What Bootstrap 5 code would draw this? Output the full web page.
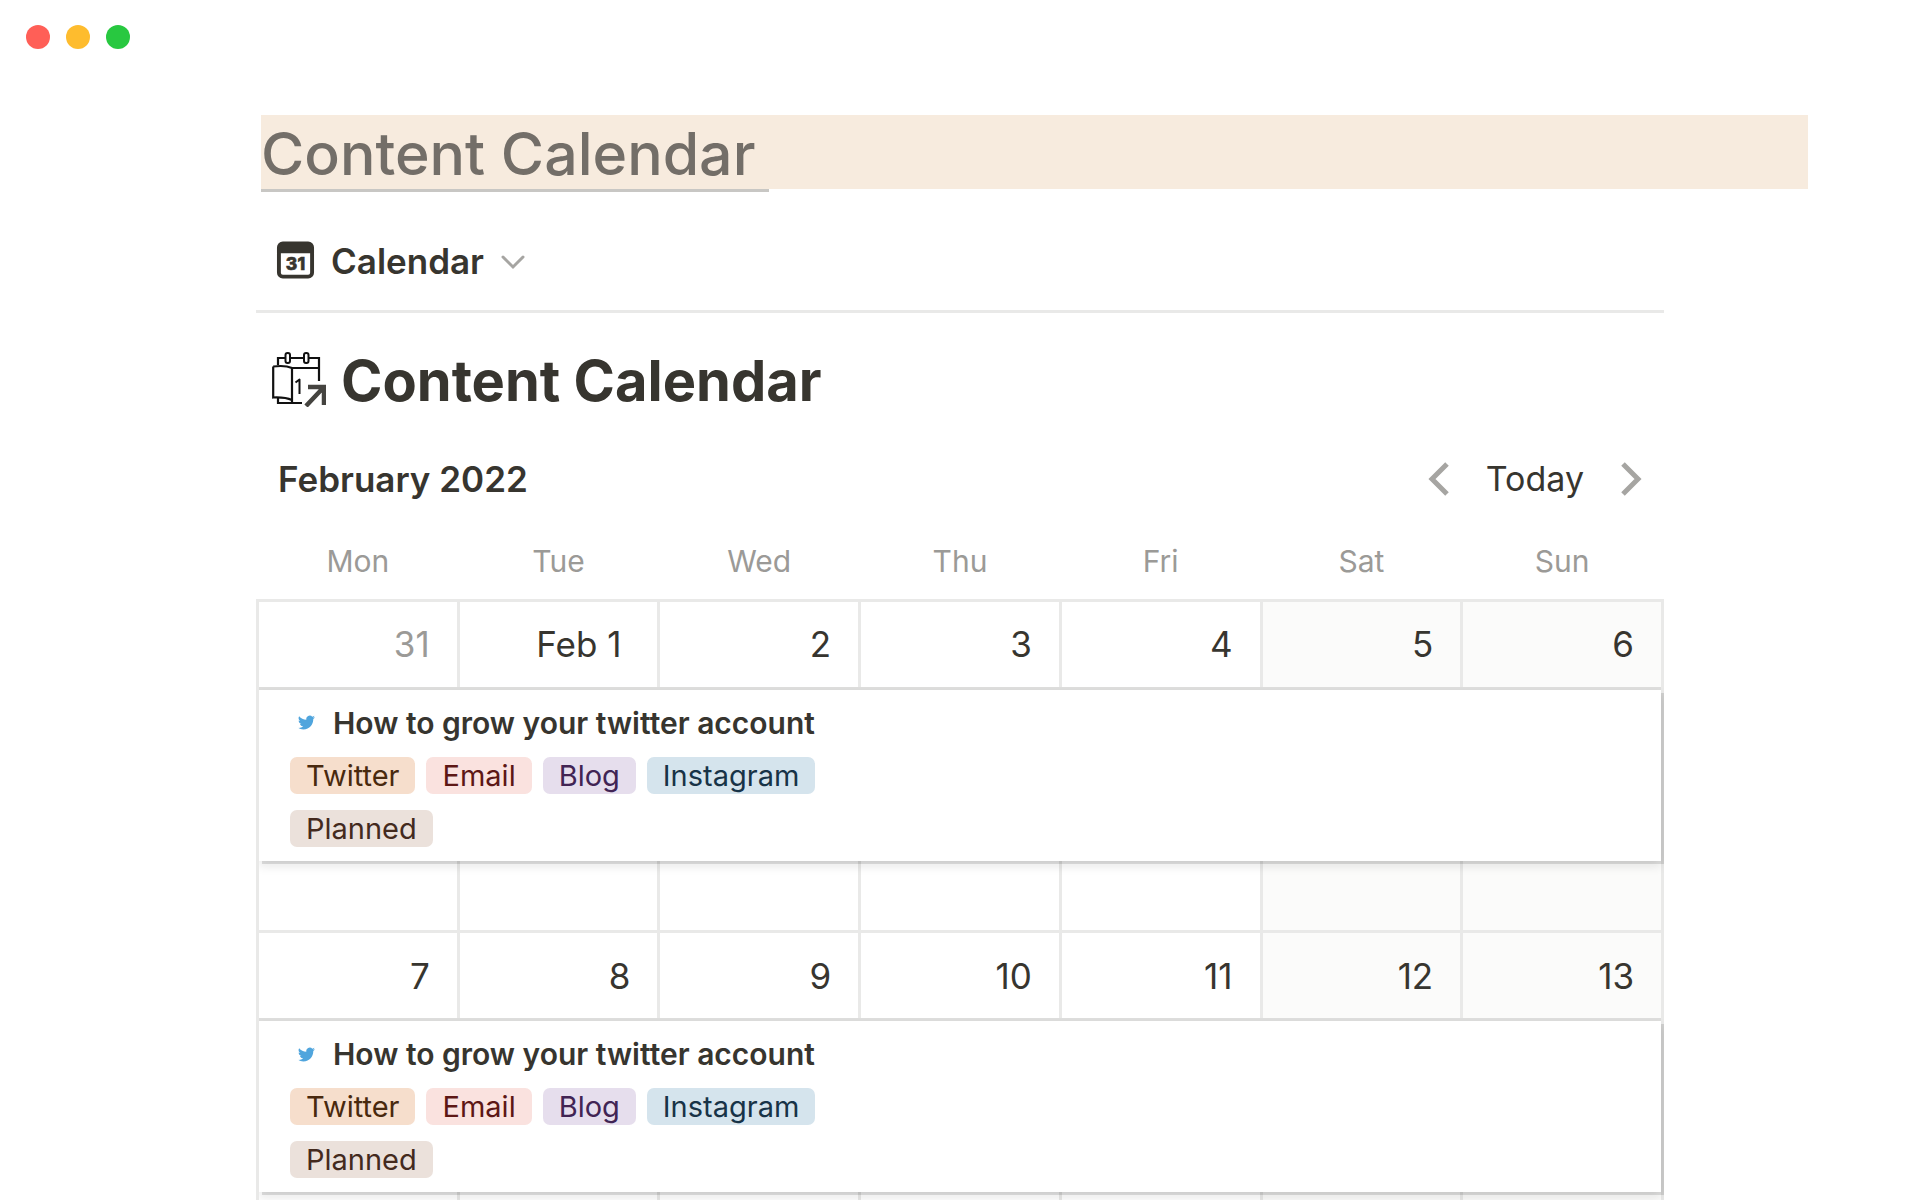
<!DOCTYPE html>
<html lang="en">
<head>
<meta charset="utf-8">
<meta name="viewport" content="width=device-width, initial-scale=1">
<title>Content Calendar</title>
<link href="https://cdn.jsdelivr.net/npm/bootstrap@5.3.0/dist/css/bootstrap.min.css" rel="stylesheet">
<style>
:root { --ink: #37352f; --muted: #9b9a97; --line: #e9e9e8; }
body { font-family: Inter, "Liberation Sans", sans-serif; color: var(--ink); background: #fff; }
.dot { width: 24px; height: 24px; border: 0; padding: 0; border-radius: 50%; }
.dot-close { background: #ff5f57; }
.dot-min { background: #febc2e; }
.dot-max { background: #28c840; }
.titlebar { padding: 25px 26px; }
.workspace { margin: 41px 256px 0 256px; }
.banner { margin: 0 -144px 0 5px; height: 74px; background: #f7ebde; }
.banner h1 { display: inline-block; height: 77px; margin: 0; padding: 2px 14px 0 0; font-size: 59px; line-height: 74px; font-weight: 500; color: #736e68; border-bottom: 3px solid #c8c7c4; white-space: nowrap; }
.views { height: 124px; padding: 22px 20px 0; border-bottom: 3px solid var(--line); }
.view-btn { color: var(--ink); font-size: 35px; line-height: 48px; font-weight: 600; }
.db-title { padding: 38px 16px 0; gap: 15px; }
.db-title svg { margin-bottom: 4px; }
.db-title h2 { font-size: 56px; line-height: 60px; font-weight: 700; margin: 0; }
.month { padding: 44px 22px 0 22px; }
.month h3, .month .btn { font-size: 35px; line-height: 48px; }
.month h3 { font-weight: 600; margin: 0; }
.month .btn { color: var(--ink); }
.month .today { font-size: 34px; margin: 0 36px; }
.cal { width: 100%; table-layout: fixed; border-collapse: collapse; }
.cal th { height: 97px; font-size: 30px; line-height: 40px; font-weight: 400; color: var(--muted); text-align: center; vertical-align: bottom; padding: 0 0 18px; }
.cal td { border: 3px solid var(--line); padding: 0; }
.cal .day { height: 88px; font-size: 35px; line-height: 48px; text-align: right; padding-right: 27px; }
.cal .weekend { background: #fbfbfa; }
.cal .other { color: var(--muted); }
.cal .month-start { padding-right: 36px; }
.cal .spacer td { height: 71px; border-top: 0; }
.cal .entry-cell { border-bottom: 0; }
.entry { height: 171px; padding: 12px 31px 0; background: #fff; box-shadow: 3px 3px 0 rgba(15,15,15,.12), 0 -3px 0 rgba(15,15,15,.05), 0 5px 10px rgba(15,15,15,.1); clip-path: inset(-3px -3px -20px 0); }
.entry a { font-size: 30px; line-height: 42px; font-weight: 600; color: var(--ink); gap: 18px; padding-left: 8px; margin-bottom: 13px; }
.tags { gap: 11px; margin-bottom: 16px; }
.tag { font-size: 29px; line-height: 38px; height: 37px; padding: 0 16px; border-radius: 7px; }
.tag-orange { background: #f6decc; color: #49290e; }
.tag-red { background: #fae2df; color: #5d1715; }
.tag-purple { background: #e6deed; color: #412454; }
.tag-blue { background: #d5e4ed; color: #183347; }
.tag-brown { background: #ebe1db; color: #442a1e; }
</style>
<script src="https://cdn.jsdelivr.net/npm/bootstrap@5.3.0/dist/js/bootstrap.bundle.min.js"></script>
</head>
<body>
<svg class="d-none" xmlns="http://www.w3.org/2000/svg">
  <symbol id="bird" viewBox="0 0 24 24"><path d="M23.95 4.57a10 10 0 0 1-2.82.77 4.96 4.96 0 0 0 2.16-2.72c-.95.55-2 .96-3.13 1.18a4.92 4.92 0 0 0-8.38 4.48C7.69 8.1 4.07 6.13 1.64 3.16a4.92 4.92 0 0 0 1.52 6.57 4.9 4.9 0 0 1-2.23-.61v.06a4.92 4.92 0 0 0 3.95 4.83 5 5 0 0 1-2.21.08 4.94 4.94 0 0 0 4.6 3.42A9.87 9.87 0 0 1 0 19.54a13.99 13.99 0 0 0 7.55 2.21c9.05 0 14-7.5 14-13.98l-.02-.63a9.94 9.94 0 0 0 2.42-2.57z" fill="#50a5dd"/></symbol>
</svg>
<div class="vh-100 overflow-hidden">
  <header class="titlebar d-flex gap-3">
    <button class="dot dot-close" aria-label="Close"></button>
    <button class="dot dot-min" aria-label="Minimise"></button>
    <button class="dot dot-max" aria-label="Zoom"></button>
  </header>
  <main class="workspace">
    <div class="banner"><h1>Content Calendar</h1></div>
    <nav class="views d-flex align-items-center">
      <button class="view-btn btn border-0 p-0 d-flex align-items-center">
        <svg class="me-3" width="39" height="40" viewBox="0 0 40 40" aria-hidden="true"><path fill-rule="evenodd" d="M7 0h26a6 6 0 0 1 6 6v26a6 6 0 0 1-6 6H7a6 6 0 0 1-6-6V6a6 6 0 0 1 6-6zM5 12v20a2 2 0 0 0 2 2h26a2 2 0 0 0 2-2V12z" fill="#37352f"/><text x="20" y="29" text-anchor="middle" font-size="18" font-weight="800" fill="#37352f" stroke="#37352f" stroke-width=".6">31</text></svg>
        <span>Calendar</span>
        <svg class="ms-3" width="26" height="18" viewBox="0 0 26 18" fill="none" aria-hidden="true"><path d="M3 5l10 10L23 5" stroke="#a6a5a2" stroke-width="3" stroke-linecap="round"/></svg>
      </button>
    </nav>
    <div class="db-title d-flex align-items-center">
      <svg width="54" height="56" viewBox="0 0 54 56" fill="none" stroke="#111" stroke-width="2" aria-hidden="true"><path d="M6 14V7h7M18 7h13M36 7h11v23M20 17h27M6 47v5h24M20 17v34" stroke-width="2.200"/><path d="M1.200 15.500q12-1.500 18.800 1.500M1.200 15.500v31q12-.5 18.800 2.500" stroke-width="2.200"/><rect x="13.500" y="2" width="4.500" height="10" rx="2"/><rect x="32" y="2" width="4.500" height="10" rx="2"/><path d="M23.500 31.500l4-3v14.500" stroke-linejoin="round"/><path d="M36 36h16v18M51 37L34 55" stroke="#454440" stroke-width="4.500"/></svg>
      <h2>Content Calendar</h2>
    </div>
    <div class="month d-flex align-items-center justify-content-between">
      <h3>February 2022</h3>
      <div class="d-flex align-items-center">
        <button class="btn border-0 p-0 d-flex" aria-label="Previous month"><svg width="22" height="36" viewBox="0 0 22 36" fill="none"><path d="M19 3L4 18l15 15" stroke="#a6a5a2" stroke-width="5"/></svg></button>
        <button class="btn border-0 p-0 today">Today</button>
        <button class="btn border-0 p-0 d-flex" aria-label="Next month"><svg width="22" height="36" viewBox="0 0 22 36" fill="none"><path d="M3 3l15 15L3 33" stroke="#a6a5a2" stroke-width="5"/></svg></button>
      </div>
    </div>
    <table class="cal">
      <thead><tr><th scope="col">Mon</th><th scope="col">Tue</th><th scope="col">Wed</th><th scope="col">Thu</th><th scope="col">Fri</th><th scope="col">Sat</th><th scope="col">Sun</th></tr></thead>
      <tbody>
        <tr><td class="day other">31</td><td class="day month-start">Feb 1</td><td class="day">2</td><td class="day">3</td><td class="day">4</td><td class="day weekend">5</td><td class="day weekend">6</td></tr>
        <tr><td class="entry-cell" colspan="7">
          <div class="entry position-relative">
            <a class="d-flex align-items-center text-decoration-none" href="#"><svg width="17" height="17" aria-hidden="true"><use href="#bird"/></svg>How to grow your twitter account</a>
            <div class="tags d-flex"><span class="tag tag-orange">Twitter</span><span class="tag tag-red">Email</span><span class="tag tag-purple">Blog</span><span class="tag tag-blue">Instagram</span></div>
            <div class="tags d-flex"><span class="tag tag-brown">Planned</span></div>
          </div></td></tr>
        <tr class="spacer"><td></td><td></td><td></td><td></td><td></td><td class="weekend"></td><td class="weekend"></td></tr>
        <tr><td class="day">7</td><td class="day">8</td><td class="day">9</td><td class="day">10</td><td class="day">11</td><td class="day weekend">12</td><td class="day weekend">13</td></tr>
        <tr><td class="entry-cell" colspan="7">
          <div class="entry position-relative">
            <a class="d-flex align-items-center text-decoration-none" href="#"><svg width="17" height="17" aria-hidden="true"><use href="#bird"/></svg>How to grow your twitter account</a>
            <div class="tags d-flex"><span class="tag tag-orange">Twitter</span><span class="tag tag-red">Email</span><span class="tag tag-purple">Blog</span><span class="tag tag-blue">Instagram</span></div>
            <div class="tags d-flex"><span class="tag tag-brown">Planned</span></div>
          </div></td></tr>
        <tr class="spacer"><td></td><td></td><td></td><td></td><td></td><td class="weekend"></td><td class="weekend"></td></tr>
      </tbody>
    </table>
  </main>
</div>
</body>
</html>
